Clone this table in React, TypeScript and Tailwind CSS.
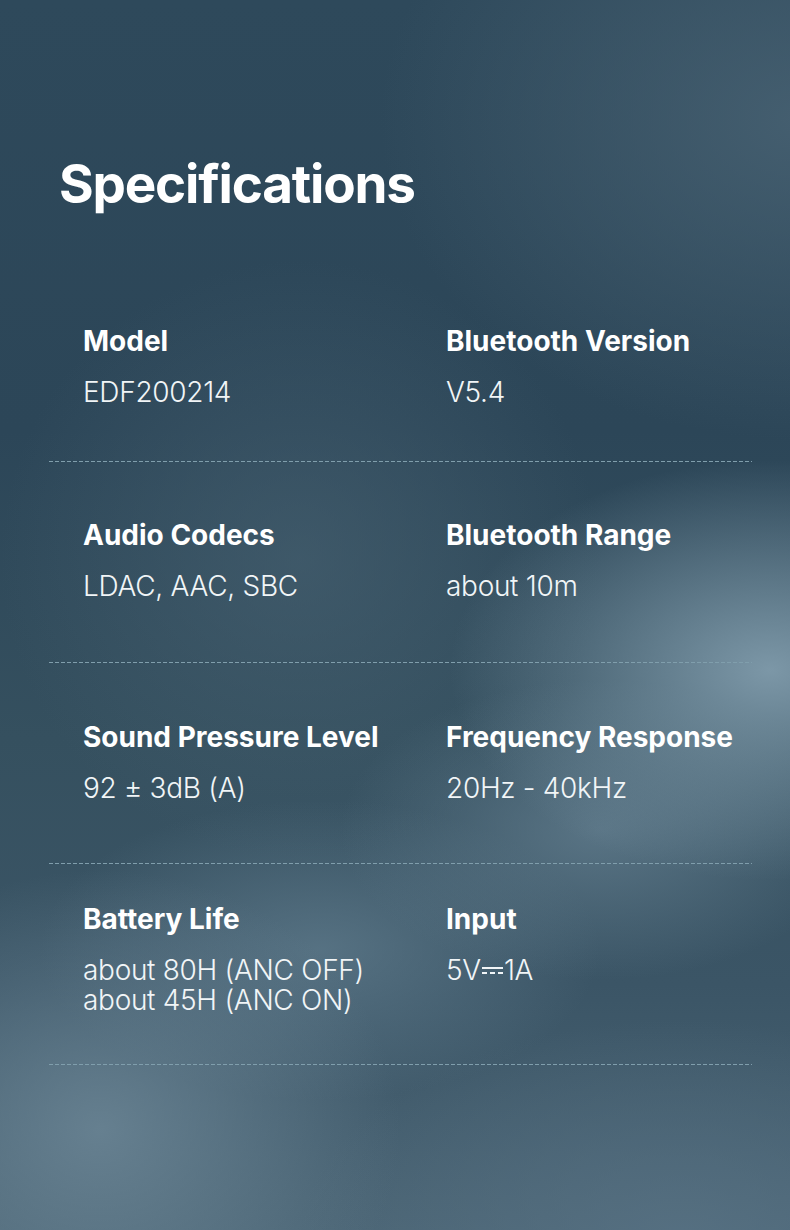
const specs = [
  {
    cells: [
      { label: "Model", value: ["EDF200214"] },
      { label: "Bluetooth Version", value: ["V5.4"] },
    ],
    shift: "pt-[63px]",
  },
  {
    cells: [
      { label: "Audio Codecs", value: ["LDAC, AAC, SBC"] },
      { label: "Bluetooth Range", value: ["about 10m"] },
    ],
    shift: "pt-[56px]",
  },
  {
    cells: [
      { label: "Sound Pressure Level", value: ["92 ± 3dB (A)"] },
      { label: "Frequency Response", value: ["20Hz - 40kHz"] },
    ],
    shift: "pt-[57px]",
  },
  {
    cells: [
      { label: "Battery Life", value: ["about 80H (ANC OFF)", "about 45H (ANC ON)"] },
      { label: "Input", value: ["5V", "DC", "1A"] },
    ],
    shift: "pt-[38px]",
  },
];

function DcSymbol() {
  return (
    <svg width="21" height="12" viewBox="0 0 21 12" className="mx-[1px] inline-block">
      <rect x="0" y="3" width="21" height="2" fill="currentColor" />
      <rect x="0" y="8" width="5" height="2" fill="currentColor" />
      <rect x="8" y="8" width="5" height="2" fill="currentColor" />
      <rect x="16" y="8" width="5" height="2" fill="currentColor" />
    </svg>
  );
}

function Value({ lines }: { lines: string[] }) {
  if (lines[1] === "DC") {
    return (
      <div className="flex items-center h-[30px] text-[28px] font-light leading-[30px] tracking-[-0.3px] text-[#f1f5f7]">
        <span>{lines[0]}</span>
        <DcSymbol />
        <span>{lines[2]}</span>
      </div>
    );
  }
  return (
    <p className="text-[28px] font-light leading-[30px] tracking-[-0.3px] text-[#f1f5f7]">
      {lines.map((l, i) => (
        <span key={l}>
          {i > 0 && <br />}
          {l}
        </span>
      ))}
    </p>
  );
}

export default function App() {
  return (
    <div
      className="w-[790px] h-[1230px] overflow-hidden text-white"
      style={{ fontFamily: "Inter, 'Noto Sans', sans-serif" }}
    >
      <div className="w-full h-full bg-[radial-gradient(ellipse_320px_210px_at_770px_670px,rgba(128,155,171,0.95),rgba(128,155,171,0)),radial-gradient(ellipse_260px_150px_at_600px_830px,rgba(104,131,148,0.7),rgba(104,131,148,0)),radial-gradient(ellipse_300px_260px_at_100px_1130px,rgba(110,136,152,0.8),rgba(110,136,152,0)),radial-gradient(ellipse_280px_150px_at_320px_950px,rgba(98,126,143,0.7),rgba(98,126,143,0)),radial-gradient(ellipse_380px_220px_at_680px_1240px,rgba(88,114,132,0.8),rgba(88,114,132,0)),radial-gradient(ellipse_420px_320px_at_800px_120px,rgba(72,98,115,0.85),rgba(72,98,115,0)),radial-gradient(ellipse_300px_300px_at_300px_560px,rgba(72,98,114,0.6),rgba(72,98,114,0)),linear-gradient(180deg,#2e495b_0%,#2c4658_35%,#35505f_60%,#3b5566_80%,#4b6575_100%)]">
        <h1 className="pl-[59px] pt-[152px] text-[53px] font-bold leading-[64px] tracking-[-1.2px]">
          Specifications
        </h1>
        <div className="mt-[45px] ml-[49px] w-[703px]">
          {specs.map((row, i) => (
            <div key={i}>
              <div className={`h-[200px] grid grid-cols-[363px_1fr] items-start pl-[34px] ${row.shift}`}>
                {row.cells.map((c) => (
                  <div key={c.label} className="flex flex-col gap-[19px]">
                    <div className="text-[28px] font-bold leading-[34px]">{c.label}</div>
                    <Value lines={c.value} />
                  </div>
                ))}
              </div>
              <div className="h-[1px] bg-[repeating-linear-gradient(90deg,#809eac_0px,#809eac_4px,transparent_4px,transparent_6px)]" />
            </div>
          ))}
        </div>
      </div>
    </div>
  );
}
